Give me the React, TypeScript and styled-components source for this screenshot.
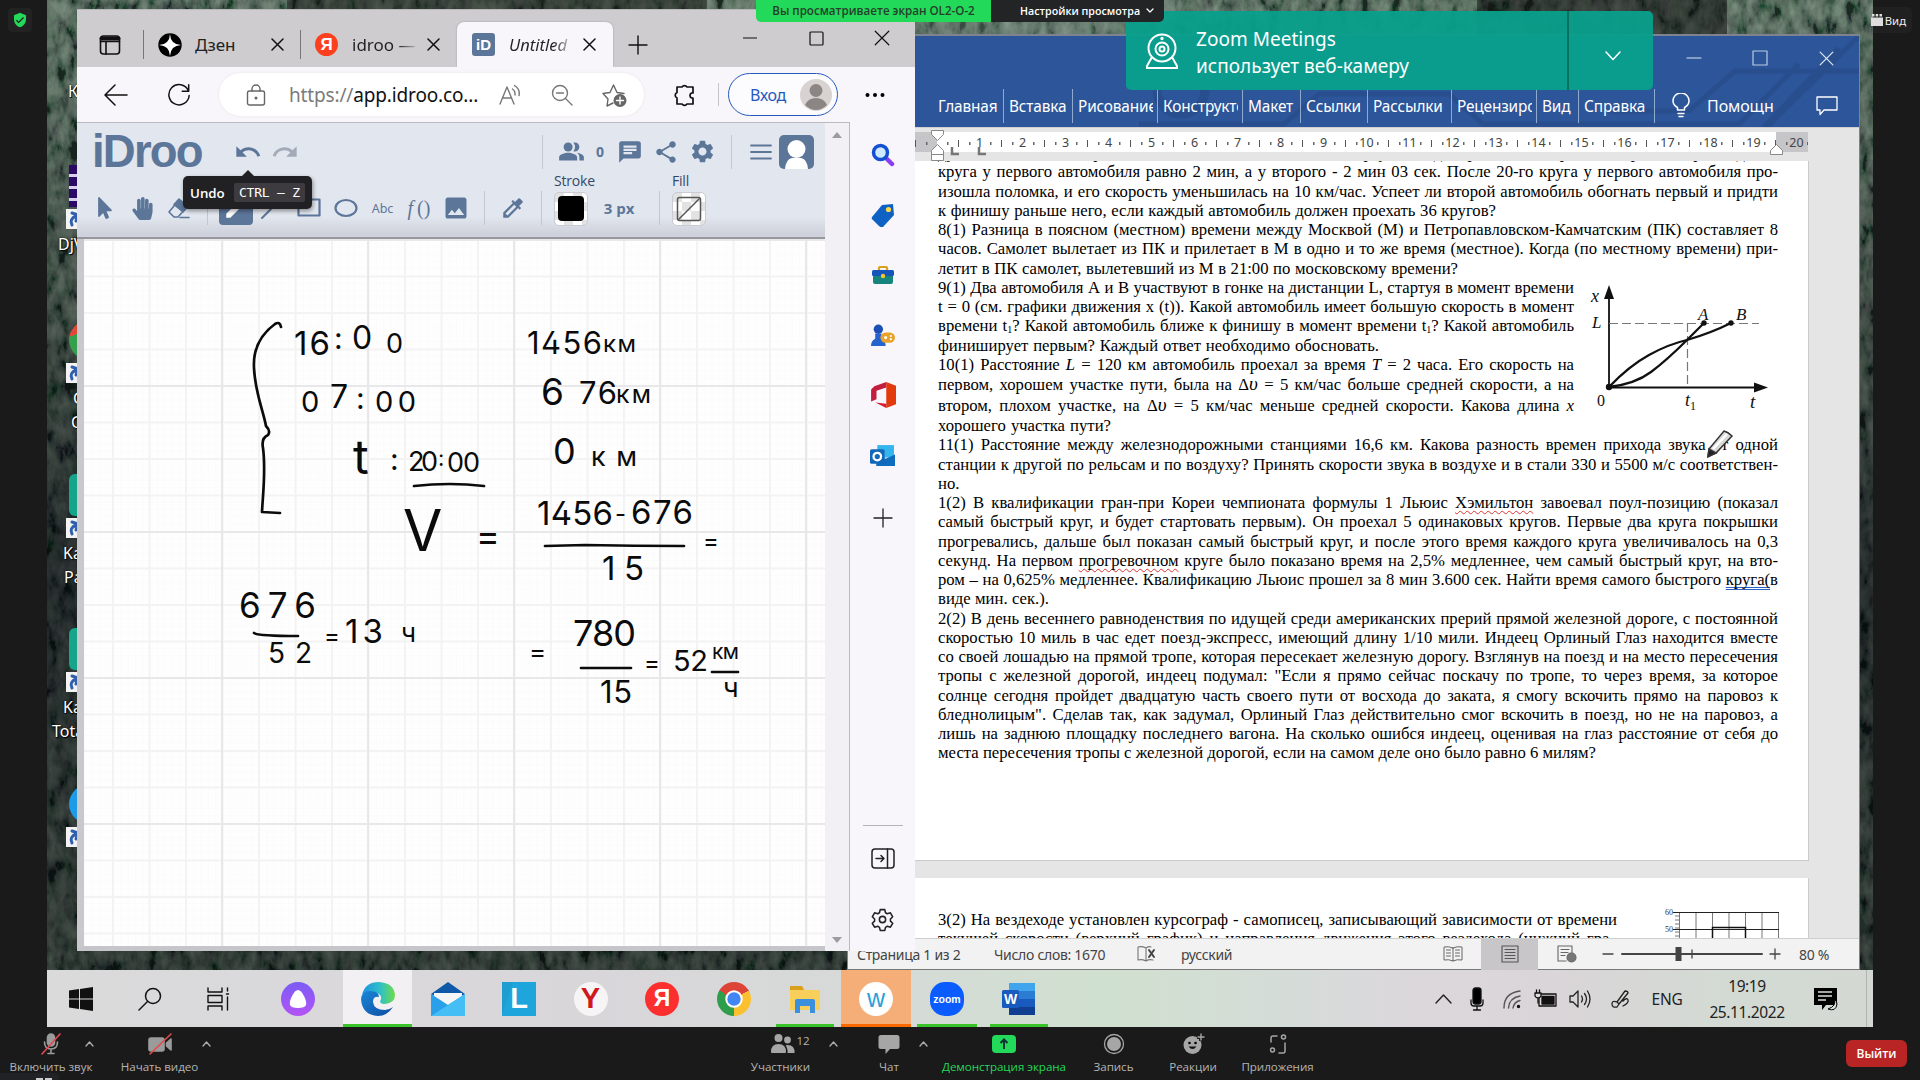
import React from 'react';
import styled, { createGlobalStyle, css } from 'styled-components';
import {
  MdUndo, MdRedo, MdPeopleAlt, MdChat, MdShare, MdSettings, MdImage, MdEdit, MdColorize, MdVerifiedUser,
} from 'react-icons/md';
import { FaHandPaper, FaMousePointer } from 'react-icons/fa';

const ui = `"Noto Sans", "Open Sans", sans-serif`;
const ink = '#5c7699';

const Global = createGlobalStyle`
  * { box-sizing: border-box; }
  body { margin: 0; background: #1a1a1a; overflow: hidden; }
  svg { display: block; flex: none; }
`;

const Screen = styled.div`
  position: relative;
  width: 1920px;
  height: 1080px;
  display: flex;
  flex-direction: column;
  background: #1a1a1a;
  font-family: ${ui};
  overflow: hidden;
`;
const Stage = styled.div`
  display: flex;
  height: 1027px;
  flex: none;
  justify-content: center;
`;
const Desktop = styled.div`
  position: relative;
  width: 1826px;
  height: 1027px;
  overflow: hidden;
  background: #1d2620;
  display: flex;
  flex-direction: column;
  justify-content: flex-end;
`;
const Wallpaper = styled.svg`
  position: absolute;
  inset: 0;
`;
const Win = styled.section<{ $x: number; $y: number; $w: number; $h: number }>`
  position: absolute;
  left: ${p => p.$x}px;
  top: ${p => p.$y}px;
  width: ${p => p.$w}px;
  height: ${p => p.$h}px;
  display: flex;
  flex-direction: column;
  overflow: hidden;
`;
const WordWin = styled(Win)`
  border: solid #7f8390;
  border-width: 2px 1px 0;
`;
const Slot = styled.div<{ $w: number }>`
  width: ${p => p.$w}px;
  flex: none;
  display: flex;
  align-items: center;
  justify-content: center;
`;
const Gap = styled.div<{ $w: number; $h?: number }>`
  width: ${p => p.$w}px;
  height: ${p => p.$h ?? 0}px;
  flex: none;
`;

/* desktop shortcuts */
const Shortcut = styled.div<{ $y: number; $c: string; $r: string }>`
  position: absolute;
  left: 19px;
  top: ${p => p.$y}px;
  width: 60px;
  display: flex;
  flex-direction: column;
  &::before {
    content: '';
    width: 46px;
    height: 42px;
    margin-left: 3px;
    background: ${p => p.$c};
    border-radius: ${p => p.$r};
  }
`;
const ArrowBadge = styled.div`
  width: 20px;
  height: 20px;
  background: #f3f3f3;
  display: flex;
  margin: 2px 0 3px;
`;
const ShortLabel = styled.span<{ $i: number }>`
  color: #fff;
  font-size: 16px;
  line-height: 24px;
  white-space: nowrap;
  margin-left: ${p => p.$i}px;
  text-shadow: 0 0 2px #000, 1px 1px 1px #000;
`;

/* browser */
const TabStrip = styled.div`
  height: 58px;
  background: #cecccf;
  display: flex;
  align-items: flex-end;
  border-top: 1px solid #b9b7b9;
`;
const Tab = styled.div<{ $w: number; $active?: boolean }>`
  width: ${p => p.$w}px;
  height: 45px;
  flex: none;
  display: flex;
  align-items: center;
  font-size: 17px;
  color: #222;
  ${p => p.$active && css`
    background: #f8f6fa;
    border-radius: 7px 7px 0 0;
    box-shadow: 0 0 2px #999;
    font-style: italic;
    font-size: 16.5px;
  `}
`;
const TabTool = styled(Slot)`
  height: 45px;
`;
const TabName = styled.span<{ $w: number; $fade?: boolean }>`
  width: ${p => p.$w}px;
  overflow: hidden;
  white-space: nowrap;
  ${p => p.$fade && css`
    background: linear-gradient(90deg, #222 60%, transparent 90%);
    background-clip: text;
    color: transparent;
  `}
`;
const TabRule = styled.i`
  width: 1px;
  height: 29px;
  background: #777;
  align-self: center;
`;
const BarRule = styled(TabRule)`
  height: 23px;
  background: #c6c4c8;
`;
const Favicon = styled.div<{ $bg: string; $r: string; $s: number }>`
  width: 23px;
  height: 23px;
  flex: none;
  border-radius: ${p => p.$r};
  background: ${p => p.$bg};
  color: #fff;
  font: 700 ${p => p.$s}px/23px "Liberation Sans", sans-serif;
  text-align: center;
`;
const Caption = styled.div`
  margin-left: auto;
  height: 58px;
  display: flex;
  align-items: center;
`;
const AddressRow = styled.div`
  height: 55px;
  flex: none;
  background: #f8f6fa;
  display: flex;
  align-items: center;
`;
const UrlPill = styled.div`
  width: 425px;
  height: 43px;
  flex: none;
  border-radius: 22px;
  background: #fff;
  box-shadow: 0 0 3px #e6e4e8;
  display: flex;
  align-items: center;
`;
const Url = styled.span`
  width: 190px;
  margin-left: 14px;
  font-size: 19px;
  letter-spacing: -0.15px;
  color: #111;
  white-space: nowrap;
  b { font-weight: 400; color: #7b7b7b; }
`;
const SignIn = styled.div`
  width: 110px;
  height: 43px;
  flex: none;
  border: 1.5px solid #2558bd;
  border-radius: 22px;
  display: flex;
  align-items: center;
  justify-content: space-between;
  padding: 0 5px 0 21px;
  font-size: 16px;
  letter-spacing: -0.3px;
  color: #2558bd;
  background: #fcfbfe;
`;
const BrowserBody = styled.div`
  flex: 1;
  display: flex;
  min-height: 0;
`;
const WebPage = styled.div`
  width: 748px;
  border-top: 1px solid #bcbac0;
  display: flex;
  flex-direction: column;
`;
const IdrooBar = styled.div`
  height: 116px;
  flex: none;
  background: linear-gradient(#e2e6ee 0 82%, #cfd2dc 97%);
  border-bottom: 2px solid #96979d;
  color: ${ink};
`;
const IdrooRow = styled.div<{ $h: number }>`
  height: ${p => p.$h}px;
  display: flex;
  align-items: center;
`;
const Logo = styled.div`
  width: 109px;
  margin-left: 15px;
  font: 700 45.5px/50px "Liberation Sans", sans-serif;
  letter-spacing: -1.8px;
  white-space: nowrap;
  color: ${ink};
`;
const Rule = styled.i<{ $m: string }>`
  width: 1px;
  height: 34px;
  background: #c2c8d3;
  margin: ${p => p.$m};
  flex: none;
`;
const Active = styled.div`
  width: 34px;
  height: 34px;
  border-radius: 4px;
  background: ${ink};
  color: #fff;
  display: flex;
  align-items: center;
  justify-content: center;
  flex: none;
`;
const AbcTool = styled.span`
  font-size: 12.5px;
`;
const FormulaTool = styled.span`
  font: italic 20px "Liberation Serif", serif;
  span { font-style: normal; }
`;
const Swatch = styled.div`
  display: flex;
  flex-direction: column;
  width: 34px;
  flex: none;
  margin-top: -19px;
  font: 14px/17px "Open Sans", sans-serif;
  letter-spacing: -0.2px;
  white-space: nowrap;
  color: #34496a;
`;
const SwatchBox = styled.div`
  margin-top: 3px;
  width: 34px;
  height: 34px;
  border-radius: 5px;
  border: 1px solid #c9ccd2;
  background: conic-gradient(#fff 25%, #e2e2e2 0 50%, #fff 0 75%, #e2e2e2 0) 0 0 / 18px 18px;
  display: flex;
  align-items: center;
  justify-content: center;
`;
const Black = styled.div`
  width: 26px;
  height: 25px;
  border-radius: 4px;
  background: #000;
`;
const Num = styled.b<{ $s: number }>`
  font-family: "Open Sans", sans-serif;
  font-size: ${p => p.$s}px;
  color: ${ink};
`;
const Avatar = styled.div`
  width: 35px;
  height: 34px;
  border-radius: 5px;
  background: ${ink};
  overflow: hidden;
  margin-right: 11px;
`;
const Board = styled.div`
  flex: 1;
  border-left: 7px solid #c9c8cc;
  border-bottom: 5px solid #c6c5ca;
  background:
    linear-gradient(90deg, #e8e8ea 0 2px, transparent 2px) 137px 0 / 146px 146px,
    linear-gradient(#e8e8ea 0 2px, transparent 2px) 0 0 / 146px 146px,
    linear-gradient(90deg, #f3f3f4 0 1.5px, transparent 1.5px) 28px 0 / 36.5px 36.5px,
    linear-gradient(#f3f3f4 0 1.5px, transparent 1.5px) 0 0 / 36.5px 36.5px,
    linear-gradient(90deg, #fbfbfb 0 1px, transparent 1px) 0 0 / 7.3px 7.3px,
    linear-gradient(#fbfbfb 0 1px, transparent 1px) 0 0 / 7.3px 7.3px,
    #fefefe;
`;
const Sheet = styled.svg`
  font-family: Inter, sans-serif;
  font-feature-settings: "cv02";
  fill: #0b0b0b;
`;
const ScrollBar = styled.div`
  width: 25px;
  background: #f2f0f4;
  border-right: 1px solid #bcbac0;
  border-top: 1px solid #bcbac0;
  display: flex;
  flex-direction: column;
  justify-content: space-between;
  align-items: center;
  padding: 9px 0 8px;
`;
const Tri = styled.i<{ $down?: boolean }>`
  border: 5.5px solid transparent;
  border-top-width: ${p => (p.$down ? 6 : 0)}px;
  border-bottom-width: ${p => (p.$down ? 0 : 6)}px;
  border-${p => (p.$down ? 'top' : 'bottom')}-color: #9c9b9e;
`;
const SideBar = styled.aside`
  width: 65px;
  background: #f8f6fa;
  display: flex;
  flex-direction: column;
  align-items: center;
  padding-top: 3px;
`;
const SideItem = styled.div<{ $h?: number; $mt?: number }>`
  height: ${p => p.$h ?? 60}px;
  margin-top: ${p => p.$mt ?? 0}px;
  display: flex;
  align-items: center;
`;
const SideRule = styled.i`
  width: 40px;
  height: 1px;
  background: #b5b3b7;
`;
const Tip = styled.div`
  position: absolute;
  left: 106px;
  top: 167px;
  width: 129px;
  height: 33px;
  border-radius: 5px;
  background: #212124;
  box-shadow: 1px 2px 4px #0006;
  display: flex;
  align-items: center;
  padding: 0 7px;
  justify-content: space-between;
  color: #fff;
  font: 600 13.3px "Open Sans", sans-serif;
  &::before {
    content: '';
    position: absolute;
    left: 59px;
    top: -6px;
    border: 6px solid transparent;
    border-top: 0;
    border-bottom-color: #212124;
  }
  kbd {
    font: 13px "DejaVu Sans Mono", monospace;
    letter-spacing: -0.2px;
    background: #3d3b40;
    border-radius: 2px;
    padding: 2px 5px;
    white-space: pre;
  }
`;

/* word */
const Ribbon = styled.header`
  height: 91px;
  flex: none;
  background: #2d5599;
  position: relative;
  display: flex;
  flex-direction: column;
  color: #fff;
`;
const RibbonArt = styled.svg`
  position: absolute;
  right: 0;
  top: 0;
`;
const TitleRow = styled.div`
  height: 53px;
  display: flex;
  align-items: center;
  justify-content: flex-end;
  padding-bottom: 9px;
  position: relative;
`;
const RibbonTabs = styled.div`
  height: 34px;
  display: flex;
  align-items: center;
  padding-left: 85px;
  position: relative;
`;
const RTab = styled.div<{ $w: number }>`
  width: ${p => p.$w}px;
  height: 34px;
  flex: none;
  padding-left: 5px;
  border-right: 1px solid #8fa9cf;
  overflow: hidden;
  white-space: nowrap;
  font-size: 15.4px;
  letter-spacing: -0.15px;
  line-height: 35px;
  span { display: block; overflow: hidden; margin-right: 4px; }
`;
const TellMe = styled.span`
  width: 67px;
  flex: none;
  font-size: 16px;
  letter-spacing: -0.1px;
`;
const RulerBand = styled.div`
  height: 34px;
  flex: none;
  background: #e5e5e5;
  border-top: 1px solid #cfcfd2;
  padding: 4px 0 0 67px;
  display: flex;
  position: relative;
`;
const Ruler = styled.div`
  height: 20px;
  width: 893px;
  display: flex;
  overflow: hidden;
  background: linear-gradient(90deg, #c6c5c7 0 22px, #fff 22px 861px, #c6c5c7 861px);
`;
const Mark = styled.div`
  width: 43px;
  flex: none;
  height: 20px;
  font-size: 12.5px;
  line-height: 22px;
  text-align: center;
  color: #444;
  background:
    linear-gradient(#555, #555) 0 8px / 1px 7px no-repeat,
    linear-gradient(#666, #666) 11px 10px / 1.5px 3px no-repeat,
    linear-gradient(#666, #666) 32px 10px / 1.5px 3px no-repeat;
`;
const Handles = styled.svg`
  position: absolute;
  left: 67px;
  top: 0;
`;
const Canvas = styled.div`
  flex: 1;
  min-height: 0;
  background: #e5e5e5;
  padding-left: 67px;
  overflow: hidden;
`;
const Paper = styled.article<{ $h: number; $pt: number }>`
  position: relative;
  width: 894px;
  height: ${p => p.$h}px;
  background: #fff;
  border: solid #cacacc;
  border-width: 0 1px 1px 0;
  padding: ${p => p.$pt}px 0 0 23px;
  margin-bottom: 17px;
  overflow: hidden;
`;
const Line = styled.p<{ $w: number; $h?: number; $mt?: number }>`
  margin: ${p => p.$mt ?? 0}px 0 0;
  width: ${p => p.$w}px;
  height: ${p => p.$h ?? 19.25}px;
  line-height: ${p => p.$h ?? 19.25}px;
  font-family: "Liberation Serif", serif;
  font-size: 16.7px;
  color: #000;
  white-space: nowrap;
  text-align-last: justify;
  text-align: justify;
  sub { font-size: 10px; line-height: 0; vertical-align: -2px; }
  u { text-decoration: underline wavy #d33 1px; text-underline-offset: 2px; text-decoration-skip-ink: none; }
  u.gram { text-decoration: underline double #2b63c4 1px; }
  em { font-size: 1.15em; line-height: 0; }
`;
const Figure = styled.svg<{ $x: number; $y: number }>`
  position: absolute;
  left: ${p => p.$x}px;
  top: ${p => p.$y}px;
`;
const StatusBar = styled.footer`
  height: 32px;
  flex: none;
  background: #f2f2f2;
  border-top: 1px solid #cfcfcf;
  border-bottom: 1px solid #777;
  display: flex;
  align-items: center;
  font-size: 14px;
  letter-spacing: -0.3px;
  color: #444;
  padding-left: 9px;
  white-space: nowrap;
`;
const StatusText = styled.span<{ $w: number }>`
  width: ${p => p.$w}px;
  flex: none;
`;
const View = styled.div<{ $on?: boolean }>`
  width: 57px;
  height: 31px;
  display: flex;
  align-items: center;
  justify-content: center;
  background: ${p => (p.$on ? '#c8c6c8' : 'none')};
`;

/* overlays */
const Toast = styled.div`
  position: absolute;
  left: 1126px;
  top: 11px;
  width: 527px;
  height: 79px;
  border-radius: 5px;
  background: #08a08cf2;
  color: #fff;
  display: flex;
  align-items: center;
  padding-left: 18px;
`;
const ToastText = styled.div`
  width: 371px;
  margin-left: 16px;
  padding-top: 4px;
  font-size: 19px;
  letter-spacing: 0.03px;
  line-height: 27px;
  white-space: nowrap;
`;
const ToastMore = styled.div`
  flex: 1;
  height: 79px;
  border-left: 2px solid #08705f;
  display: flex;
  align-items: center;
  justify-content: center;
  padding: 10px 0 0 3px;
`;
const ShareBar = styled.div`
  position: absolute;
  left: 756px;
  top: 0;
  height: 22px;
  display: flex;
  font: 600 11.6px/22px "Open Sans", sans-serif;
  white-space: nowrap;
  border-radius: 0 0 5px 5px;
  overflow: hidden;
`;
const Viewing = styled.div`
  width: 235px;
  background: #23d959;
  color: #25402c;
  text-align: center;
`;
const ViewOptions = styled.div`
  width: 173px;
  background: #222426;
  color: #fff;
  font-size: 10.7px;
  display: flex;
  align-items: center;
  gap: 6px;
  padding-left: 29px;
`;
const Shield = styled.div`
  position: absolute;
  left: 8px;
  top: 8px;
  width: 24px;
  height: 24px;
  border-radius: 4px;
  background: #222;
  color: #23d959;
  display: flex;
  align-items: center;
  justify-content: center;
`;
const ViewBtn = styled.div`
  position: absolute;
  left: 1868px;
  top: 7px;
  width: 44px;
  height: 26px;
  border-radius: 5px;
  background: linear-gradient(90deg, transparent 5px, #202020 5px);
  color: #eee;
  display: flex;
  align-items: center;
  justify-content: space-between;
  padding: 0 6px 0 3px;
  font-size: 11.3px;
`;

/* taskbar */
const TaskBar = styled.div`
  position: relative;
  height: 57px;
  flex: none;
  background: linear-gradient(90deg, #dadadb 0, #d9d6da 30%, #d6dad8 45%, #d0e0cf 58%, #d5dcd8 68%, #dbd8dc 74%, #dad5d9 82%, #d3dad3 92%, #d3d8d3);
  display: flex;
  color: #222;
`;
const TaskApp = styled.div<{ $w: number; $bg?: string; $bar?: string; $inset?: number }>`
  width: ${p => p.$w}px;
  height: 57px;
  flex: none;
  display: flex;
  align-items: center;
  justify-content: center;
  background:
    linear-gradient(${p => p.$bar ?? 'transparent'}, ${p => p.$bar ?? 'transparent'}) center bottom / calc(100% - ${p => p.$inset ?? 0}px) 3px no-repeat,
    ${p => p.$bg ?? 'transparent'};
`;
const Disc = styled.div<{ $bg: string; $c?: string; $s?: number; $r?: string; $weight?: number }>`
  width: 34px;
  height: 34px;
  border-radius: ${p => p.$r ?? '50%'};
  background: ${p => p.$bg};
  color: ${p => p.$c ?? '#fff'};
  font: ${p => p.$weight ?? 700} ${p => p.$s ?? 22}px "Liberation Sans", sans-serif;
  display: flex;
  align-items: center;
  justify-content: center;
`;
const Clock = styled.div`
  width: 110px;
  text-align: center;
  font-size: 15.5px;
  line-height: 26px;
  letter-spacing: -0.4px;
`;
const Tray = styled.div`
  margin-left: auto;
  display: flex;
  align-items: center;
  font-size: 15.5px;
  letter-spacing: -0.3px;
`;
const DesktopEdge = styled.i`
  width: 1px;
  height: 57px;
  margin: 0 6px 0 16px;
  background: #b0b3b0;
`;

/* meeting toolbar */
const MeetBar = styled.div`
  height: 53px;
  display: flex;
  align-items: center;
`;
const Tool = styled.div<{ $w: number; $green?: boolean }>`
  width: ${p => p.$w}px;
  height: 53px;
  flex: none;
  display: flex;
  flex-direction: column;
  align-items: center;
  padding-top: 6px;
  gap: 3px;
  font: 11.6px/17px "Open Sans", sans-serif;
  letter-spacing: -0.05px;
  white-space: nowrap;
  color: ${p => (p.$green ? '#23d959' : '#b4b4b4')};
`;
const People = styled.span`
  display: flex;
  margin-left: 19px;
  height: 22px;
  line-height: 16px;
`;
const Caret = styled.div<{ $w: number; $ml?: number }>`
  width: ${p => p.$w}px;
  margin-left: ${p => p.$ml ?? 0}px;
  flex: none;
  display: flex;
  justify-content: center;
  padding-bottom: 19px;
`;
const Leave = styled.div`
  width: 61px;
  height: 27px;
  border-radius: 6px;
  background: #b92525;
  color: #fff;
  font: 600 12px/27px "Open Sans", sans-serif;
  text-align: center;
  margin: 0 13px 0 auto;
`;
const Peek = styled.div`
  position: absolute;
  left: 0;
  top: 1073px;
  width: 59px;
  height: 7px;
  background: #212225;
  border-radius: 0 4px 0 0;
  display: flex;
  justify-content: flex-end;
  align-items: flex-end;
  padding-right: 6px;
`;

type IP = { s?: number; w?: number; h?: number; c?: string; sw?: number; vb?: string; f?: string; children?: React.ReactNode };
const I = ({ s = 24, w, h, c = '#222', sw = 1.5, vb = '0 0 24 24', f = 'none', children }: IP) => (
  <svg width={w ?? s} height={h ?? s} viewBox={vb} fill={f} stroke={c} strokeWidth={sw} strokeLinecap="round" strokeLinejoin="round">{children}</svg>
);
const Cross = ({ s = 13, c = '#111', sw = 1.5 }: IP) => <I s={s} c={c} sw={sw} vb="0 0 13 13"><path d="M1 1l11 11M12 1L1 12" /></I>;
const Gear = ({ s = 24 }: IP) => (
  <I s={s} c="#222" sw={1.5}>
    <circle cx="12" cy="12" r="3" />
    <path d="M9.8 2.5h4.4l.7 3 1.7 1 3-.9 2.2 3.8-2.2 2.1v2l2.2 2.1-2.2 3.8-3-.9-1.7 1-.7 3H9.8l-.7-3-1.7-1-3 .9-2.2-3.8 2.2-2.1v-2L2.2 9.4l2.2-3.8 3 .9 1.7-1z" />
  </I>
);
const Up = () => <I w={9} h={6} vb="0 0 9 6" c="#aaa" sw={1.4}><path d="M1 5l3.5-4L8 5" /></I>;

/* board notes: x, baseline, size, text, width over which the characters are spread */
const notes: [number, number, number, string, number?][] = [
  [295, 355, 33, '16', 36], [335, 349, 30, ':'], [353, 349, 32, '0'], [387, 353, 27, '0'],
  [302, 412, 29, '0'], [331, 408, 32, '7'], [357, 409, 30, ':'], [376, 412, 29, '00', 41],
  [354, 474, 48, 't'], [391, 470, 30, ':'], [409, 471, 27, '20', 30], [439, 466, 22, ':'], [448, 472, 27, '00', 33],
  [404, 551, 57, 'V'], [477, 549, 36, '='],
  [528, 354, 31, '1456', 75], [604, 352, 24, 'км', 33],
  [542, 405, 37, '6'], [580, 404, 31, '76', 38], [617, 403, 25, 'км', 35],
  [554, 464, 36, '0'], [592, 466, 27, 'км', 46],
  [538, 525, 33, '1456', 76], [616, 522, 24, '-'], [632, 524, 33, '676', 62], [704, 549, 24, '='],
  [603, 580, 33, '15', 42],
  [240, 618, 35, '676', 77], [269, 663, 28, '52', 44], [325, 644, 24, '='],
  [346, 643, 33, '13', 38], [402, 642, 26, 'ч'],
  [530, 661, 26, '='], [574, 646, 36, '780', 63], [601, 703, 31, '15', 32], [645, 671, 24, '='],
  [674, 671, 29, '52', 35], [713, 659, 21, 'км', 27], [724, 697, 27, 'ч'],
];

const Notes = () => (
  <Sheet width="740" height="700" viewBox="85 239 740 700">
    {notes.map(([x, y, s, t, w], i) => (
      <text key={i} x={x} y={y} fontSize={s} textLength={w} lengthAdjust="spacing">{t}</text>
    ))}
    <g stroke="#0b0b0b" strokeWidth="2.7" fill="none" strokeLinecap="round" strokeLinejoin="round">
      <path d="M282 327q-1-6-6-3C261 335 254 350 255 368C256 392 264 410 267 426q5 5 2 9q-7 3-5 13c3 22 0 44-1 64l18 1" />
      <path d="M415 486q36-4 70 0" />
      <path d="M546 546l40-1q50 1 99 1" />
      <path d="M255 633q4 3 44 3" />
      <path d="M582 668h50M713 672h26" />
    </g>
  </Sheet>
);

const W = 840;
const N = 636;

export default function App() {
  return (
    <Screen>
      <Global />
      <Stage>
        <Desktop>
          <Wallpaper width="1826" height="1027">
            <defs>
              <filter id="bark" x="0" y="0" width="100%" height="100%">
                <feTurbulence type="fractalNoise" baseFrequency="0.09 0.05" numOctaves="5" seed="8" />
                <feColorMatrix values="0.7 0.3 0 0 -0.34  0.7 0.45 0 0 -0.38  0.65 0.3 0 0 -0.31  0 0 0 0 1" />
              </filter>
              <linearGradient id="shade" x1="0" x2="0" y1="0" y2="1">
                <stop offset="0" stopColor="#3c5a48" stopOpacity=".45" />
                <stop offset=".3" stopColor="#1c2a24" stopOpacity=".6" />
                <stop offset=".55" stopColor="#0b1013" stopOpacity=".76" />
                <stop offset="1" stopColor="#121d19" stopOpacity=".65" />
              </linearGradient>
            </defs>
            <rect width="1826" height="1027" filter="url(#bark)" />
            <rect width="1826" height="1027" fill="url(#shade)" />
            <rect x="240" width="420" height="34" fill="#120f0d" opacity=".45" />
            <rect x="868" width="260" height="34" fill="#8fa79a" opacity=".28" />
            <rect x="1430" width="250" height="34" fill="#0d0a0c" opacity=".5" />
          </Wallpaper>

          <Shortcut $y={37} $c="transparent" $r="0"><ShortLabel $i={2}>К</ShortLabel></Shortcut>
          {([
            [165, 'repeating-linear-gradient(#2a0a66 0 9px, #d8d0ea 9px 12px)', '0', [['DjVu', -8]]],
            [319, 'linear-gradient(160deg, #e2483a 30%, #35a04b 31%)', '50%', [['G', 7], ['C', 5]]],
            [474, '#14a58b', '6px', [['Ka', -3], ['Pa', -2]]],
            [628, '#14a58b', '6px', [['Ka', -3], ['Total', -14]]],
            [783, '#1e9be8', '50%', []],
          ] as [number, string, string, [string, number][]][]).map(([y, c, r, l], i) => (
            <Shortcut key={i} $y={y} $c={c} $r={r}>
              <ArrowBadge><I s={20} c="#2f5fae" sw={3} vb="0 0 20 20"><path d="M6 16q-3-6 4-9M6 4l6 2-2 6" /></I></ArrowBadge>
              {l.map(([t, m]) => <ShortLabel key={t} $i={m}>{t}</ShortLabel>)}
            </Shortcut>
          ))}

          {/* Word */}
          <WordWin $x={800} $y={34} $w={1013} $h={936}>
            <Ribbon>
              <RibbonArt width="780" height="91" viewBox="-140 0 780 91" fill="none" stroke="#264c8a" strokeWidth="5" opacity=".7">
                <circle cx="-38" cy="54" r="24" strokeWidth="9" />
                <path d="M-80 88H65l35-30H230l34 30H520l60-60M390 75h80l46-40H640M545 91L620 12M640 0L548 91" />
              </RibbonArt>
              <TitleRow>
                <Slot $w={66}><I s={16} c="#dce5f3" sw={1.2} vb="0 0 16 16"><path d="M1 8h14" /></I></Slot>
                <Slot $w={66}><I s={16} c="#b9cbe6" sw={1.2} vb="0 0 16 16"><rect x="1" y="1" width="14" height="14" /></I></Slot>
                <Slot $w={66}><Cross s={15} c="#dce5f3" sw={1.1} /></Slot>
              </TitleRow>
              <RibbonTabs>
                {([['Главная', 71], ['Вставка', 69], ['Рисование', 85], ['Конструктор', 85], ['Макет', 58], ['Ссылки', 67], ['Рассылки', 84], ['Рецензирование', 85], ['Вид', 42], ['Справка', 76]] as [string, number][]).map(([t, w]) => (
                  <RTab key={t} $w={w}><span>{t}</span></RTab>
                ))}
                <Slot $w={52}>
                  <I w={18} h={26} vb="0 0 18 26" c="#fff"><path d="M5.500 17v-2.500Q1 12 1 8a8 8 0 0116 0q0 4-4.500 6.500V17zM6 20.500h6M7 23.500h4" /></I>
                </Slot>
                <TellMe>Помощн</TellMe>
                <Gap $w={42} />
                <I w={22} h={20} vb="0 0 22 20" c="#fff" sw={1.3}><path d="M1 1h20v13H8l-4 4.500V14H1z" /></I>
              </RibbonTabs>
            </Ribbon>
            <RulerBand>
              <Ruler>
                {Array.from({ length: 21 }, (_, i) => <Mark key={i}>{i || ''}</Mark>)}
              </Ruler>
              <Handles width="900" height="34" viewBox="915 128 900 34" fill="#fff" stroke="#888" strokeWidth="1">
                <path d="M931.500 130.500h12v4l-6 6-6-6zM931.500 154.500h12v6h-12zM931.500 154.500v-4l6-6 6 6v4zM1770.500 154.500v-4l6-6 6 6v4z" />
                <path d="M952 147v7h7M979 147v7h7" fill="none" stroke="#777" strokeWidth="2.500" />
              </Handles>
            </RulerBand>
            <Canvas>
              <Paper $h={700} $pt={0}>
                <Line $w={W} $mt={-17.8}>ду ними, на старте гонки оба автомобиля стартуют одновременно, причём время прохождения</Line>
                <Line $w={W}>круга у первого автомобиля равно 2 мин, а у второго - 2 мин 03 сек. После 20-го круга у первого автомобиля про-</Line>
                <Line $w={W}>изошла поломка, и его скорость уменьшилась на 10 км/час. Успеет ли второй автомобиль обогнать первый и придти</Line>
                <Line $w={558}>к финишу раньше него, если каждый автомобиль должен проехать 36 кругов?</Line>
                <Line $w={W}>8(1) Разница в поясном (местном) времени между Москвой (М) и Петропавловском-Камчатским (ПК) составляет 8</Line>
                <Line $w={W}>часов. Самолет вылетает из ПК и прилетает в М в одно и то же время (местное). Когда (по местному времени) при-</Line>
                <Line $w={520}>летит в ПК самолет, вылетевший из М в 21:00 по московскому времени?</Line>
                <Line $w={N}>9(1) Два автомобиля А и В участвуют в гонке на дистанции L, стартуя в момент времени</Line>
                <Line $w={N}>t = 0 (см. графики движения x (t)). Какой автомобиль имеет большую скорость в момент</Line>
                <Line $w={N}>времени t<sub>1</sub>? Какой автомобиль ближе к финишу в момент времени t<sub>1</sub>? Какой автомобиль</Line>
                <Line $w={441}>финиширует первым? Каждый ответ необходимо обосновать.</Line>
                <Line $w={N}>10(1) Расстояние <i>L</i> = 120 км автомобиль проехал за время <i>T</i> = 2 часа. Его скорость на</Line>
                <Line $w={N} $h={21}>первом, хорошем участке пути, была на Δ<em>υ</em> = 5 км/час больше средней скорости, а на</Line>
                <Line $w={N} $h={21}>втором, плохом участке, на Δ<em>υ</em> = 5 км/час меньше средней скорости. Какова длина <i>x</i></Line>
                <Line $w={173}>хорошего участка пути?</Line>
                <Line $w={W}>11(1) Расстояние между железнодорожными станциями 16,6 км. Какова разность времен прихода звука от одной</Line>
                <Line $w={W}>станции к другой по рельсам и по воздуху? Принять скорости звука в воздухе и в стали 330 и 5500 м/с соответствен-</Line>
                <Line $w={22}>но.</Line>
                <Line $w={W}>1(2) В квалификации гран-при Кореи чемпионата формулы 1 Льюис <u>Хэмильтон</u> завоевал поул-позицию (показал</Line>
                <Line $w={W}>самый быстрый круг, и будет стартовать первым). Он проехал 5 одинаковых кругов. Первые два круга покрышки</Line>
                <Line $w={W}>прогревались, дальше был показан самый быстрый круг, и после этого время каждого круга увеличивалось на 0,3</Line>
                <Line $w={W}>секунд. На первом <u>прогревочном</u> круге было показано время на 2,5% медленнее, чем самый быстрый круг, на вто-</Line>
                <Line $w={W}>ром – на 0,625% медленнее. Квалификацию Льюис прошел за 8 мин 3.600 сек. Найти время самого быстрого <u className="gram">круга(</u>в</Line>
                <Line $w={111}>виде мин. сек.).</Line>
                <Line $w={W}>2(2) В день весеннего равноденствия по идущей среди американских прерий прямой железной дороге, с постоянной</Line>
                <Line $w={W}>скоростью 10 миль в час едет поезд-экспресс, имеющий длину 1/10 мили. Индеец Орлиный Глаз находится вместе</Line>
                <Line $w={W}>со своей лошадью на прямой тропе, которая пересекает железную дорогу. Взглянув на поезд и на место пересечения</Line>
                <Line $w={W}>тропы с железной дорогой, индеец подумал: "Если я прямо сейчас поскачу по тропе, то через время, за которое</Line>
                <Line $w={W}>солнце сегодня пройдет двадцатую часть своего пути от восхода до заката, я смогу вскочить прямо на паровоз к</Line>
                <Line $w={W}>бледнолицым". Сделав так, как задумал, Орлиный Глаз действительно смог вскочить в поезд, но не на паровоз, а</Line>
                <Line $w={W}>лишь на заднюю площадку последнего вагона. На сколько ошибся индеец, оценивая на глаз расстояние от себя до</Line>
                <Line $w={658}>места пересечения тропы с железной дорогой, если на самом деле оно было равно 6 милям?</Line>

                <Figure $x={670} $y={120} width="190" height="135" viewBox="1586 281 190 135" fill="none" stroke="#111" strokeWidth="1.8">
                  <path d="M1610 388V292M1609 387.500H1760" />
                  <path d="M1610 285l5 14h-10zM1769 387.500l-14 5v-10z" fill="#111" stroke="none" />
                  <path d="M1610 323.500H1760M1688.500 323v64" stroke="#777" strokeWidth="1.200" strokeDasharray="9 4" />
                  <path d="M1610 387Q1636 384 1652 372T1688 340Q1698 330 1705 323" strokeWidth="2.300" />
                  <path d="M1610 387Q1630 366 1650 355T1688 340Q1712 333 1732 323" strokeWidth="2.300" />
                  <g fill="#111" stroke="none">
                    <circle cx="1705" cy="323" r="2.700" /><circle cx="1732" cy="323" r="2.700" /><circle cx="1610" cy="387" r="3.200" />
                    <g fontFamily="Liberation Serif, serif" fontStyle="italic" fontSize="18">
                      <text x="1592" y="302">x</text><text x="1593" y="328" fontSize="17">L</text>
                      <text x="1699" y="320" fontSize="17">A</text><text x="1737" y="320" fontSize="17">B</text>
                      <text x="1598" y="406" fontSize="16" fontStyle="normal">0</text>
                      <text x="1686" y="406">t</text><text x="1691" y="410" fontSize="12" fontStyle="normal">1</text>
                      <text x="1751" y="408" fontSize="19">t</text>
                    </g>
                  </g>
                </Figure>
                <Figure $x={791} $y={268} width="30" height="32" viewBox="0 0 30 32" stroke="#333" strokeWidth="1.500">
                  <path d="M2 27L3 20L18 2Q22 3 26 7L10 24Z" fill="#d9d9d9" /><path d="M2 28l1-8 7 4z" fill="#222" />
                  <path d="M7 20L21 5" stroke="#fff" strokeWidth="2.500" />
                </Figure>
              </Paper>
              <Paper $h={120} $pt={32}>
                <Line $w={679}>3(2) На вездеходе установлен курсограф - самописец, записывающий зависимости от времени</Line>
                <Line $w={677}>текущей скорости (верхний график) и направления движения этого вездехода (нижний гра-</Line>
                <Figure $x={740} $y={28} width="130" height="40" viewBox="1655 906 130 40" fill="none" stroke="#777" strokeWidth="1">
                  <path d="M1679.500 912V946M1696 912V946M1712.500 912V946M1729 912V946M1745.500 912V946M1762 912V946M1778.500 912V946M1675 916h4M1675 920h4M1675 924h4M1675 928h4M1675 932h4M1675 936h4" />
                  <path d="M1673 912.500H1779M1673 929.500H1779" stroke="#222" />
                  <path d="M1712.500 946V927.500H1745.500V946" stroke="#111" strokeWidth="1.500" />
                  <g fill="#333" stroke="none" fontSize="8" fontFamily="Liberation Serif, serif"><text x="1665" y="915">60</text><text x="1665" y="932">50</text></g>
                </Figure>
              </Paper>
            </Canvas>
            <StatusBar>
              <StatusText $w={137}>Страница 1 из 2</StatusText>
              <StatusText $w={143}>Число слов: 1670</StatusText>
              <Slot $w={20}><I w={20} h={18} vb="0 0 20 18" c="#777" sw={1.100}><path d="M9 3Q5 1 1 2v13q4-1 8 1zM9 3q3-2 5-1M9 16q3-2 7-1" /><path d="M12 5l5 7M17 5l-5 7" stroke="#444" strokeWidth="2" /></I></Slot>
              <Gap $w={24} />
              <StatusText $w={58}>русский</StatusText>
              <Gap $w={185} />
              <View><I w={20} h={18} vb="0 0 20 18" c="#666" sw={1}><path d="M10 3Q5 1 1 2v13q5-1 9 1 4-2 9-1V2q-5-1-9 1zM10 3v13M3.500 5h4M3.500 8h4M3.500 11h4M12.500 5h4M12.500 8h4M12.500 11h4" /></I></View>
              <View $on><I w={18} h={18} vb="0 0 18 18" c="#555" sw={1.100}><path d="M1 1h16v16H1zM4 4.500h10M4 7.500h10M4 10.500h10M4 13.500h10" /></I></View>
              <View><I w={20} h={18} vb="0 0 20 18" c="#666" sw={1.100}><path d="M15 8V1H1v15h8M4 4.500h8M4 7.500h7M4 10.500h4" /><circle cx="14.500" cy="12.500" r="4.500" fill="#777" /></I></View>
              <Gap $w={7} />
              <I w={180} h={20} vb="0 0 180 20" c="#444" sw={1.300}>
                <path d="M1 10h10M168 10h10M173 5v10M90 6v8" /><path d="M20 10h140" strokeWidth="2" /><path d="M76.500 3v14" strokeWidth="6" strokeLinecap="butt" />
              </I>
              <Gap $w={17} />
              <StatusText $w={40}>80 %</StatusText>
            </StatusBar>
          </WordWin>

          {/* Edge */}
          <Win $x={30} $y={9} $w={838} $h={942}>
            <TabStrip>
              <TabTool $w={66}>
                <I s={22} vb="0 0 22 22" c="#111" sw={1.600}><rect x="1.500" y="2" width="19" height="18" rx="3" /><path d="M7 8v12M1.500 7.500h19" /><path d="M2.500 4.500h17" strokeWidth="4" /></I>
              </TabTool>
              <Tab $w={157}>
                <TabRule /><Gap $w={14} />
                <I s={24} vb="0 0 24 24" f="#000" c="none"><circle cx="12" cy="12" r="11.700" /><path d="M12 1q.5 10.500 11 11-10.500.5-11 11-.5-10.500-11-11 10.500-.5 11-11z" fill="#fff" /></I>
                <Gap $w={13} /><TabName $w={76}>Дзен</TabName><Cross />
              </Tab>
              <Tab $w={157}>
                <TabRule /><Gap $w={14} />
                <Favicon $bg="#fc3f1d" $s={17} $r="50%">Я</Favicon>
                <Gap $w={14} /><TabName $w={75} $fade>idroo —</TabName><Cross />
              </Tab>
              <Tab $w={156} $active>
                <Gap $w={15} />
                <Favicon $bg={ink} $s={15} $r="3px">iD</Favicon>
                <Gap $w={14} /><TabName $w={74} $fade>Untitled</TabName><Cross />
              </Tab>
              <TabTool $w={50}><I s={20} vb="0 0 20 20" c="#111" sw={1.400}><path d="M10 1v18M1 10h18" /></I></TabTool>
              <Caption>
                <Slot $w={66}><I s={14} vb="0 0 14 14" c="#111" sw={1.200}><path d="M0 7h14" /></I></Slot>
                <Slot $w={66}><I s={15} vb="0 0 15 15" c="#111" sw={1.200}><rect x="1" y="1" width="13" height="13" rx="1" /></I></Slot>
                <Slot $w={66}><Cross s={16} sw={1} /></Slot>
              </Caption>
            </TabStrip>
            <AddressRow>
              <Gap $w={7} />
              <Slot $w={64}><I w={24} h={22} vb="0 0 24 22" c="#111" sw={1.500}><path d="M23 11H1.500M11 1L1 11l10 10" /></I></Slot>
              <Slot $w={62}><I s={24} vb="0 0 26 26" c="#111" sw={1.600}><path d="M23 8A11 11 0 1 0 24 13.500M23.500 2v7h-7" /></I></Slot>
              <Gap $w={9} />
              <UrlPill>
                <Gap $w={27} />
                <I w={20} h={24} vb="0 0 20 24" c="#666" sw={1.400}><rect x="1.500" y="8" width="17" height="14" rx="2" /><path d="M6 8V6a4 4 0 018 0v2" /><circle cx="10" cy="15" r=".8" fill="#666" /></I>
                <Gap $w={9} />
                <Url><b>https://</b>app.idroo.co...</Url>
                <Gap $w={2} />
                <Slot $w={62}><I w={24} h={22} vb="0 0 24 22" c="#777" sw={1.400}><path d="M1 20L8 3l7 17M3.500 14h9M13.500 5q3 2 2.500 6M15.500 1.500q6 4 4.500 10" /></I></Slot>
                <Slot $w={39}><I s={22} vb="0 0 22 22" c="#777" sw={1.400}><circle cx="9" cy="9" r="7.500" /><path d="M14.500 14.500L21 21M5.500 9h7" /></I></Slot>
                <Slot $w={66}><I s={26} vb="0 0 26 26" c="#666" sw={1.400}><path d="M12 21l-6 3 1-7-5-5.500 7-1L12.500 3l3.500 7.500 7 1" /><circle cx="19" cy="18.500" r="6.500" fill="#666" stroke="none" /><path d="M19 15v7M15.500 18.500h7" stroke="#fff" /></I></Slot>
              </UrlPill>
              <Gap $w={27} />
              <I s={26} vb="0 0 26 26" c="#111" sw={1.700}><path d="M8 5h3a3 3 0 015 0h6v6h-1.500a2.800 2.800 0 000 5H22v6h-6a3 3 0 01-5 0H6v-6a3 3 0 010-5.500V5z" /></I>
              <Gap $w={21} />
              <BarRule />
              <Gap $w={9} />
              <SignIn>Вход
                <svg width="32" height="32" viewBox="0 0 32 32"><circle cx="16" cy="16" r="16" fill="#d8d3d0" /><circle cx="16" cy="11.500" r="6.500" fill="#8b8684" /><path d="M5 26q3-7 11-7t11 7q-5 5-11 5T5 26z" fill="#8b8684" /></svg>
              </SignIn>
              <Gap $w={27} />
              <svg width="20" height="6"><circle cx="2.500" cy="3" r="2" /><circle cx="10" cy="3" r="2" /><circle cx="17.500" cy="3" r="2" /></svg>
            </AddressRow>
            <BrowserBody>
              <WebPage>
                <IdrooBar>
                  <IdrooRow $h={57}>
                    <Logo>iDroo</Logo>
                    <Gap $w={28} />
                    <Slot $w={37}><MdUndo size={28} /></Slot>
                    <Slot $w={37}><MdRedo size={28} color="#a4abb8" /></Slot>
                    <Rule $m="0 11px 0 auto" />
                    <Slot $w={35}><MdPeopleAlt size={27} /></Slot>
                    <Slot $w={22}><Num $s={14}>0</Num></Slot>
                    <Slot $w={37}><MdChat size={26} /></Slot>
                    <Slot $w={36}><MdShare size={26} /></Slot>
                    <Slot $w={36}><MdSettings size={27} /></Slot>
                    <Rule $m="0 11px 0 11px" />
                    <Slot $w={36}><I w={22} h={16} vb="0 0 22 16" c={ink} sw={1.800}><path d="M1 1.500h20M1 8h20M1 14.500h20" /></I></Slot>
                    <Avatar><svg width="35" height="34"><circle cx="17.500" cy="14" r="9" fill="#fff" /><path d="M6 34q1-10 7-11h9q6 1 7 11z" fill="#fff" /></svg></Avatar>
                  </IdrooRow>
                  <IdrooRow $h={56}>
                    <Gap $w={9} />
                    <Slot $w={38}><FaMousePointer size={22} /></Slot>
                    <Slot $w={37}><FaHandPaper size={23} /></Slot>
                    <Slot $w={35}><I s={24} c={ink} sw={1.600}><path d="M12 4l8 7-9 10H7l-5-5z" /><path d="M12 3l9 7.500-5 5.500-9-7.500z" fill={ink} /><path d="M13 21.500h9" /></I></Slot>
                    <Rule $m="0 11px 0 11px" />
                    <Active><MdEdit size={26} /></Active>
                    <Slot $w={37}><I s={24} c={ink} sw={2}><path d="M2 22L22 2" /></I></Slot>
                    <Slot $w={38}><I w={24} h={20} vb="0 0 24 20" c={ink} sw={2.200}><rect x="1.500" y="1.500" width="21" height="16" /></I></Slot>
                    <Slot $w={36}><I w={24} h={20} vb="0 0 24 20" c={ink} sw={2.200}><ellipse cx="12" cy="10" rx="10.500" ry="8" /></I></Slot>
                    <Slot $w={37}><AbcTool>Abc</AbcTool></Slot>
                    <Slot $w={36}><FormulaTool>f<span>&thinsp;()</span></FormulaTool></Slot>
                    <Slot $w={37}><MdImage size={28} /></Slot>
                    <Rule $m="0 10px 0 10px" />
                    <Slot $w={36}><MdColorize size={26} /></Slot>
                    <Rule $m="0 12px 0 10px" />
                    <Swatch>Stroke<SwatchBox><Black /></SwatchBox></Swatch>
                    <Slot $w={62}><Num $s={15}>3 px</Num></Slot>
                    <Rule $m="0 12px 0 9px" />
                    <Swatch>Fill<SwatchBox><I s={26} c="#555" sw={1.500} vb="0 0 26 26"><rect x="1.500" y="1.500" width="23" height="23" rx="2" /><path d="M3 23L23 3" /></I></SwatchBox></Swatch>
                  </IdrooRow>
                </IdrooBar>
                <Board><Notes /></Board>
              </WebPage>
              <ScrollBar><Tri /><Tri $down /></ScrollBar>
              <SideBar>
                <SideItem><I s={24} sw={0}><path d="M14 14l7 7" stroke="#8b3df0" strokeWidth="4.500" /><circle cx="9.500" cy="9.500" r="7" stroke="#1450d2" strokeWidth="3.500" fill="#cfeaff" /></I></SideItem>
                <SideItem><I s={24} sw={0}><path d="M1 14L11 2l11-1 1 11-11 12q-2 1-4-1l-6-6q-2-1-1-3z" fill="#0f62c4" /><circle cx="17.500" cy="6.500" r="2.600" fill="#ffd84a" /></I></SideItem>
                <SideItem><I s={24} sw={0}><path d="M8 8V5q0-1 1-1h6q1 0 1 1v3" stroke="#d9a21c" strokeWidth="2.200" /><rect x="1" y="7" width="22" height="6" rx="1.500" fill="#1554b8" /><path d="M2 13h20v6q0 2-2 2H4q-2 0-2-2z" fill="#16847c" /><circle cx="12" cy="13" r="2.200" fill="#f4c430" /></I></SideItem>
                <SideItem><I s={25} sw={0}><circle cx="8" cy="6" r="4.500" fill="#1c4fb5" /><path d="M1 22q0-5 4-7V10h6v5q4 2 4 7z" fill="#2563cf" /><rect x="10" y="9" width="14" height="10" rx="5" fill="#e9a32a" /><circle cx="15" cy="14" r="1.500" fill="#fff" /><circle cx="20" cy="12.500" r="1" fill="#fff" /><circle cx="20" cy="15.500" r="1" fill="#fff" /></I></SideItem>
                <SideItem><I s={26} sw={0}><path d="M15 0l9 3.500v17L15 24z" fill="#e23a0c" /><path d="M15 0L4 4 1 7v11l5-2V8l9-3z" fill="#c41e3f" /><path d="M5 19l10 1v4z" fill="#d81f30" /></I></SideItem>
                <SideItem><I s={25} sw={0}><rect x="7" y="2" width="16" height="12" fill="#35b5ee" /><path d="M6 11l9 4 9-4v11H6z" fill="#0f6cbd" /><rect x="0" y="6" width="14" height="14" rx="1.500" fill="#1267b8" /><circle cx="7" cy="13" r="3.600" stroke="#fff" strokeWidth="2.200" /></I></SideItem>
                <SideItem $h={66}><I s={20} vb="0 0 20 20" c="#222" sw={1.300}><path d="M10 1v18M1 10h18" /></I></SideItem>
                <Gap $w={1} $h={274} />
                <SideRule />
                <SideItem $mt={3}><I s={24} c="#222" sw={1.500}><rect x="1" y="2" width="22" height="19" rx="3" /><path d="M16.500 2v19M5 11.500h8M10 8.500l3 3-3 3" /></I></SideItem>
                <SideItem><Gear s={25} /></SideItem>
              </SideBar>
            </BrowserBody>
            <Tip>Undo <kbd>CTRL – Z</kbd></Tip>
          </Win>

          <TaskBar>
            <TaskApp $w={68}><svg width="24" height="24" viewBox="0 0 24 24"><path d="M0 3.500l10-1.400V11.500H0zM11 2L24 0v11.500H11zM0 12.500h10V22L0 20.500zM11 12.500h13V24l-13-1.900z" fill="#111" /></svg></TaskApp>
            <TaskApp $w={69}><I s={24} c="#111" sw={1.500}><circle cx="15" cy="9" r="7.500" /><path d="M9.500 14.500L1 23" /></I></TaskApp>
            <TaskApp $w={68}><I s={24} c="#111" sw={1.400}><path d="M2 1v4h14V1M2 23v-4h14v4M2 8.500h14v7H2zM21.500 1v3M21.500 10v13M20.500 7h2" /></I></TaskApp>
            <TaskApp $w={91}><Disc $bg="linear-gradient(#7a5cf5, #b453f5)"><svg width="18" height="20" viewBox="0 0 18 20"><path d="M9 1q3 0 6 6t2 9-8 3-8-3 2-9 6-6z" fill="#fff" /></svg></Disc></TaskApp>
            <TaskApp $w={69} $bg="#f2f0f3" $bar="#39c42a">
              <svg width="34" height="34" viewBox="0 0 34 34">
                <defs>
                  <linearGradient id="eg" x1="0" x2="1"><stop offset="0" stopColor="#1e8fe0" /><stop offset=".55" stopColor="#2ec0c8" /><stop offset="1" stopColor="#6fdc4a" /></linearGradient>
                  <linearGradient id="eb" x1="0" x2="1" y2="1"><stop offset="0" stopColor="#1b86d8" /><stop offset="1" stopColor="#0c4da0" /></linearGradient>
                </defs>
                <path d="M1 13Q4 0 18 0q15 1 16 13 0 8-10 9-7 0-4-5 1-4-4-6Q8 8 1 13z" fill="url(#eg)" />
                <path d="M0 17q1-8 9-8 9 0 9 6-6-1-6 5 1 8 12 8 4 0 8-3-6 9-15 9Q1 33 0 17z" fill="url(#eb)" />
              </svg>
            </TaskApp>
            <TaskApp $w={71}><svg width="34" height="34" viewBox="0 0 34 34"><path d="M0 12L17 0l17 12-17 10z" fill="#0f5aa8" /><path d="M3 11h28v12H3z" fill="#f4f6f8" /><path d="M0 12l17 11 17-11v22H0z" fill="#2aa0ea" /><path d="M0 34l34-22v22z" fill="#45bdf5" /></svg></TaskApp>
            <TaskApp $w={72}><Disc $bg="linear-gradient(110deg, #1d9dd0 0 25%, #1da5dc 25%)" $r="0" $s={29}>L</Disc></TaskApp>
            <TaskApp $w={71}><Disc $bg="#f6f4f4" $c="#cf1720" $s={29}>Y</Disc></TaskApp>
            <TaskApp $w={72}><Disc $bg="#fc2f2f" $s={23}>Я</Disc></TaskApp>
            <TaskApp $w={71}><Disc $bg="conic-gradient(from -60deg, #db4437 0 33.300%, #fbc02d 0 66.600%, #2e9e4a 0)"><svg width="18" height="18"><circle cx="9" cy="9" r="7.700" fill="#4285f4" stroke="#fff" strokeWidth="2" /></svg></Disc></TaskApp>
            <TaskApp $w={72} $bar="#39c42a" $inset={14}><svg width="32" height="28" viewBox="0 0 32 28"><path d="M1 1h12l3 4h15v20H1z" fill="#f7cf5a" /><path d="M1 1h12l2 4H1z" fill="#d9a01e" /><path d="M6 28V16q0-2 2-2h16q2 0 2 2v12h-5v-7H11v7z" fill="#3b8fdd" /></svg></TaskApp>
            <TaskApp $w={70} $bg="#f5ae78" $bar="#fb6a00"><Disc $bg="#fff" $c="#2a9fd6" $s={25} $weight={400}>w</Disc></TaskApp>
            <TaskApp $w={72} $bar="#39c42a" $inset={12}><Disc $bg="#0b5cff" $s={10.500} $r="15px">zoom</Disc></TaskApp>
            <TaskApp $w={71} $bar="#39c42a" $inset={13}><svg width="34" height="32" viewBox="0 0 34 32"><rect x="7" width="26" height="8" fill="#41a5ee" /><rect x="7" y="8" width="26" height="8" fill="#2b7cd3" /><rect x="7" y="16" width="26" height="8" fill="#185abd" /><rect x="7" y="24" width="26" height="8" fill="#103f91" /><rect y="7" width="17" height="18" rx="1.500" fill="#185abd" /><text x="2" y="21" fontFamily="Liberation Sans, sans-serif" fontWeight="700" fontSize="14" fill="#fff">W</text></svg></TaskApp>
            <Tray>
              <Slot $w={34}><I w={17} h={10} vb="0 0 17 10" c="#222" sw={1.400}><path d="M1 9l7.500-8L16 9" /></I></Slot>
              <Slot $w={34}><I s={24} c="#111" sw={1.300}><rect x="8" y="1" width="8" height="16" rx="2.500" fill="#000" /><path d="M6 13v3q0 3 3 3h6q3 0 3-3v-3M12 19v4M8.500 23h7" /></I></Slot>
              <Slot $w={36}><I s={20} vb="0 0 20 20" c="#555" sw={1.400}><path d="M2 19Q2 4 18 2M6.500 19Q7 9 18 7M11 19q1-6 7-7.500" /><circle cx="16.500" cy="17.500" r="1" fill="#111" stroke="#111" /></I></Slot>
              <Slot $w={32}><I w={24} h={20} vb="0 0 24 20" c="#111" sw={1.300}><rect x="5" y="5" width="17" height="12" /><rect x="8" y="7.500" width="12" height="7.500" fill="#111" /><path d="M1 4h6v3q-1 2-3 2T1 7zM2.500 1v3M5.500 1v3M4 9v5" fill="#ddd" /></I></Slot>
              <Slot $w={36}><I w={22} h={20} vb="0 0 22 20" c="#222" sw={1.300}><path d="M1 7h3l5-5v16l-5-5H1zM12.500 7q2 3 0 6M15.500 4.500q4 5.500 0 11M18.500 2q5 8 0 16" /></I></Slot>
              <Slot $w={44}><I s={20} vb="0 0 20 20" c="#222" sw={1.300}><path d="M7 13L15 2q3 0 3 2L9 15zM7 13q-5-2-5 2t5 3l2-3M13 12q4-4 5-1t-5 6" /></I></Slot>
              <Slot $w={50}>ENG</Slot>
              <Clock>19:19<br />25.11.2022</Clock>
              <Slot $w={48}><svg width="24" height="24" viewBox="0 0 24 24"><path d="M0 1h23v17H12l-4 5v-5H0z" fill="#000" /><path d="M4 5h14M4 9h14M4 13h8" stroke="#ddd" strokeWidth="1.300" /><path d="M20 12q3 7-6 10 8 3 9-5 0-3-3-5z" fill="#ddd" stroke="#000" /></svg></Slot>
              <DesktopEdge />
            </Tray>
          </TaskBar>
        </Desktop>
      </Stage>

      <MeetBar>
        <Tool $w={102}>
          <I s={22} vb="0 0 22 22" c="#9b9b9b" sw={1.600}><rect x="7.500" y="1" width="7" height="12" rx="3.500" fill="#9b9b9b" /><path d="M4.500 9q0 7 6.500 7t6.500-7M11 16v4M8 20.500h6" /><path d="M20 1L2 21" stroke="#e5484d" /></I>
          Включить звук
        </Tool>
        <Caret $w={18} $ml={-22}><Up /></Caret>
        <Gap $w={11} />
        <Tool $w={101}>
          <I w={26} h={22} vb="0 0 26 22" c="#9b9b9b" sw={1.600}><rect x="2" y="5" width="15" height="13" rx="2" fill="#9b9b9b" /><path d="M19.500 10l4.500-4v11l-4.500-4z" fill="#9b9b9b" /><path d="M24 1L3 21" stroke="#e5484d" /></I>
          Начать видео
        </Tool>
        <Caret $w={18} $ml={-13}><Up /></Caret>
        <Gap $w={523} />
        <Tool $w={85}>
          <People>
            <I w={26} h={22} vb="0 0 26 22" sw={0} c="none" f="#a6a6a6"><circle cx="8.500" cy="5" r="4" /><circle cx="17.500" cy="7" r="3.400" /><path d="M1 19q0-8 7.500-8t7.500 8q0 1-1 1H2q-1 0-1-1zM17.500 20h7q.5-8-7-8-1 0-2 .5 2.500 3 2 7.500z" /></I>
            12
          </People>
          Участники
        </Tool>
        <Caret $w={20}><Up /></Caret>
        <Gap $w={21} />
        <Tool $w={50}><I w={24} h={22} vb="0 0 24 22" sw={0} f="#a6a6a6"><path d="M4 2h16q2.500 0 2.500 2.500v9q0 2.500-2.500 2.500h-7l-4.500 5v-5H4q-2.500 0-2.500-2.500v-9Q1.500 2 4 2z" /></I>Чат</Tool>
        <Caret $w={18}><Up /></Caret>
        <Tool $w={144} $green><svg width="24" height="22"><rect y="2" width="24" height="18" rx="4" fill="#23d959" /><path d="M12 16V7M8.500 10L12 6.500l3.500 3.500" stroke="#133" strokeWidth="2" fill="none" /></svg>Демонстрация экрана</Tool>
        <Tool $w={75}><svg width="22" height="22"><circle cx="11" cy="11" r="9.500" fill="none" stroke="#a6a6a6" strokeWidth="1.300" /><circle cx="11" cy="11" r="7" fill="#a6a6a6" /></svg>Запись</Tool>
        <Tool $w={84}><svg width="24" height="22"><circle cx="11.500" cy="12" r="9" fill="#a6a6a6" /><circle cx="8.500" cy="10" r="1.300" /><circle cx="14.500" cy="10" r="1.300" /><path d="M7.500 13.500q4 5 8 0z" fill="#111" /><path d="M20 0v8M16 4h8" stroke="#1a1a1a" strokeWidth="4" /><path d="M20 0.500v7M16.500 4h7" stroke="#a6a6a6" strokeWidth="1.400" /></svg>Реакции</Tool>
        <Tool $w={85}><I w={20} h={22} vb="0 0 20 22" c="#a6a6a6" sw={1.500}><path d="M3 9V5q0-2 2-2h4M17 10v8q0 2-2 2h-4" /><circle cx="15.500" cy="4" r="2" /><circle cx="4.500" cy="17" r="2" /></I>Приложения</Tool>
        <Leave>Выйти</Leave>
      </MeetBar>

      <Toast>
        <svg width="36" height="38" viewBox="0 0 36 38" fill="none" stroke="#fff" strokeWidth="2"><circle cx="18" cy="16" r="13.500" /><circle cx="18" cy="17" r="6.500" /><circle cx="18" cy="17" r="2.500" /><circle cx="18" cy="6.500" r=".7" /><path d="M8 25l-5 9v2h30v-2l-5-9" /></svg>
        <ToastText>Zoom Meetings<br />использует веб-камеру</ToastText>
        <ToastMore><I w={16} h={10} vb="0 0 16 10" c="#fff" sw={1.500}><path d="M1 1l7 7.500L15 1" /></I></ToastMore>
      </Toast>
      <ShareBar>
        <Viewing>Вы просматриваете экран OL2-O-2</Viewing>
        <ViewOptions>Настройки просмотра <I w={8} h={6} vb="0 0 8 6" c="#fff" sw={1.300}><path d="M1 1l3 3 3-3" /></I></ViewOptions>
      </ShareBar>
      <Shield><MdVerifiedUser size={16} /></Shield>
      <ViewBtn><svg width="12" height="12"><path d="M1 0h2.500v2.500H1zM4.700 0h2.500v2.500H4.700zM8.500 0H11v2.500H8.500zM0 3.500h12V12H0z" fill="#ddd" /></svg>Вид</ViewBtn>
      <Peek><svg width="17" height="2"><path d="M0 1h7M9 1h7" stroke="#ccc" strokeWidth="2" /></svg></Peek>
    </Screen>
  );
}
